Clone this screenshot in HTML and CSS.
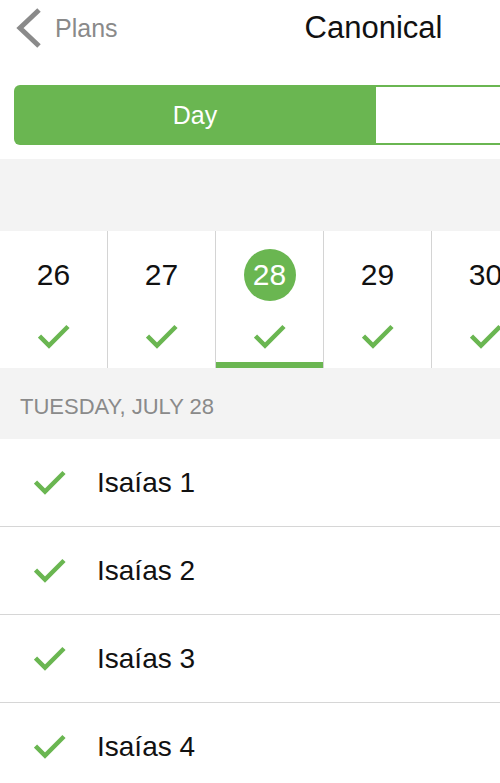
FILE: index.html
```html
<!DOCTYPE html>
<html lang="en">
<head>
<meta charset="utf-8">
<title>Canonical</title>
<link rel="stylesheet" href="styles.css">
</head>
<body>
<div class="screen">
  <header class="nav">
    <svg class="back-icon" width="28" height="42" viewBox="0 0 28 42"><polyline points="24,3 5,21 24,39" fill="none" stroke="#8a8a8a" stroke-width="5"/></svg>
    <span class="back-label">Plans</span>
    <span class="title">Canonical</span>
  </header>

  <div class="segment">
    <div class="seg seg-active">Day</div>
    <div class="seg seg-idle"></div>
  </div>

  <div class="band"></div>

  <div class="days">
    <div class="day"><span class="num">26</span><svg class="day-check" width="32" height="26" viewBox="0 0 32 26"><path d="M1.5 12 L11 21.5 L30 2.5" fill="none" stroke="#6ab651" stroke-width="4.5"/></svg></div>
    <div class="day"><span class="num">27</span><svg class="day-check" width="32" height="26" viewBox="0 0 32 26"><path d="M1.5 12 L11 21.5 L30 2.5" fill="none" stroke="#6ab651" stroke-width="4.5"/></svg></div>
    <div class="day day-selected"><span class="num num-selected">28</span><svg class="day-check" width="32" height="26" viewBox="0 0 32 26"><path d="M1.5 12 L11 21.5 L30 2.5" fill="none" stroke="#6ab651" stroke-width="4.5"/></svg></div>
    <div class="day"><span class="num">29</span><svg class="day-check" width="32" height="26" viewBox="0 0 32 26"><path d="M1.5 12 L11 21.5 L30 2.5" fill="none" stroke="#6ab651" stroke-width="4.5"/></svg></div>
    <div class="day"><span class="num">30</span><svg class="day-check" width="32" height="26" viewBox="0 0 32 26"><path d="M1.5 12 L11 21.5 L30 2.5" fill="none" stroke="#6ab651" stroke-width="4.5"/></svg></div>
  </div>

  <div class="date-label">TUESDAY, JULY 28</div>

  <ul class="readings">
    <li class="reading"><svg class="row-check" width="32" height="26" viewBox="0 0 32 26"><path d="M1.5 12 L11 21.5 L30 2.5" fill="none" stroke="#6ab651" stroke-width="4.5"/></svg><span>Isaías 1</span></li>
    <li class="reading"><svg class="row-check" width="32" height="26" viewBox="0 0 32 26"><path d="M1.5 12 L11 21.5 L30 2.5" fill="none" stroke="#6ab651" stroke-width="4.5"/></svg><span>Isaías 2</span></li>
    <li class="reading"><svg class="row-check" width="32" height="26" viewBox="0 0 32 26"><path d="M1.5 12 L11 21.5 L30 2.5" fill="none" stroke="#6ab651" stroke-width="4.5"/></svg><span>Isaías 3</span></li>
    <li class="reading"><svg class="row-check" width="32" height="26" viewBox="0 0 32 26"><path d="M1.5 12 L11 21.5 L30 2.5" fill="none" stroke="#6ab651" stroke-width="4.5"/></svg><span>Isaías 4</span></li>
  </ul>
</div>
</body>
</html>
```

FILE: styles.css
```css
* { box-sizing: border-box; }

html, body {
  margin: 0;
  padding: 0;
  background: #ffffff;
  overflow: hidden;
}

body {
  font-family: "Liberation Sans", Arial, sans-serif;
  color: #111111;
  width: 500px;
  height: 783px;
}

.screen {
  width: 500px;
  overflow: hidden;
}

.nav {
  display: flex;
  align-items: center;
  height: 56px;
  padding-left: 15px;
}

.back-icon {
  flex: none;
  display: block;
}

.back-label {
  margin-left: 12px;
  font-size: 25px;
  color: #8a8a8a;
}

.title {
  margin-left: 187px;
  font-size: 31px;
  color: #111111;
  white-space: nowrap;
}

.segment {
  display: flex;
  margin: 29px 0 0 14px;
  width: 724px;
  height: 60px;
}

.seg {
  height: 60px;
}

.seg-active {
  width: 362px;
  background: #6ab651;
  border-radius: 6px 0 0 6px;
  color: #ffffff;
  font-size: 25px;
  display: flex;
  align-items: center;
  justify-content: center;
}

.seg-idle {
  flex: 1;
  background: #ffffff;
  border-top: 2px solid #6ab651;
  border-bottom: 2px solid #6ab651;
}

.band {
  margin-top: 14px;
  height: 72px;
  background: #f3f3f3;
}

.days {
  display: flex;
  margin-left: -1px;
  height: 137px;
  background: #ffffff;
}

.day {
  flex: none;
  width: 108px;
  border-left: 1px solid #d4d4d4;
  display: flex;
  flex-direction: column;
  align-items: center;
  padding-top: 18px;
}

.day-selected {
  background: linear-gradient(#6ab651, #6ab651) no-repeat;
  background-origin: border-box;
  background-clip: border-box;
  background-position: left bottom;
  background-size: 100% 6px;
}

.num {
  display: flex;
  align-items: center;
  justify-content: center;
  width: 52px;
  height: 52px;
  font-size: 30px;
  color: #111111;
}

.num-selected {
  background: #6ab651;
  border-radius: 50%;
  color: #ffffff;
}

.day-check {
  display: block;
  margin-top: 23px;
}

.date-label {
  height: 71px;
  padding: 28px 20px 0;
  font-size: 22px;
  line-height: 22px;
  color: #8a8a8a;
  background: #f3f3f3;
}

.readings {
  list-style: none;
  margin: 0;
  padding: 0;
}

.reading {
  display: flex;
  align-items: center;
  height: 88px;
  padding-left: 34px;
  border-bottom: 1px solid #d6d6d6;
  font-size: 28px;
  color: #111111;
}

.row-check {
  flex: none;
  display: block;
  margin-right: 31px;
}
```
